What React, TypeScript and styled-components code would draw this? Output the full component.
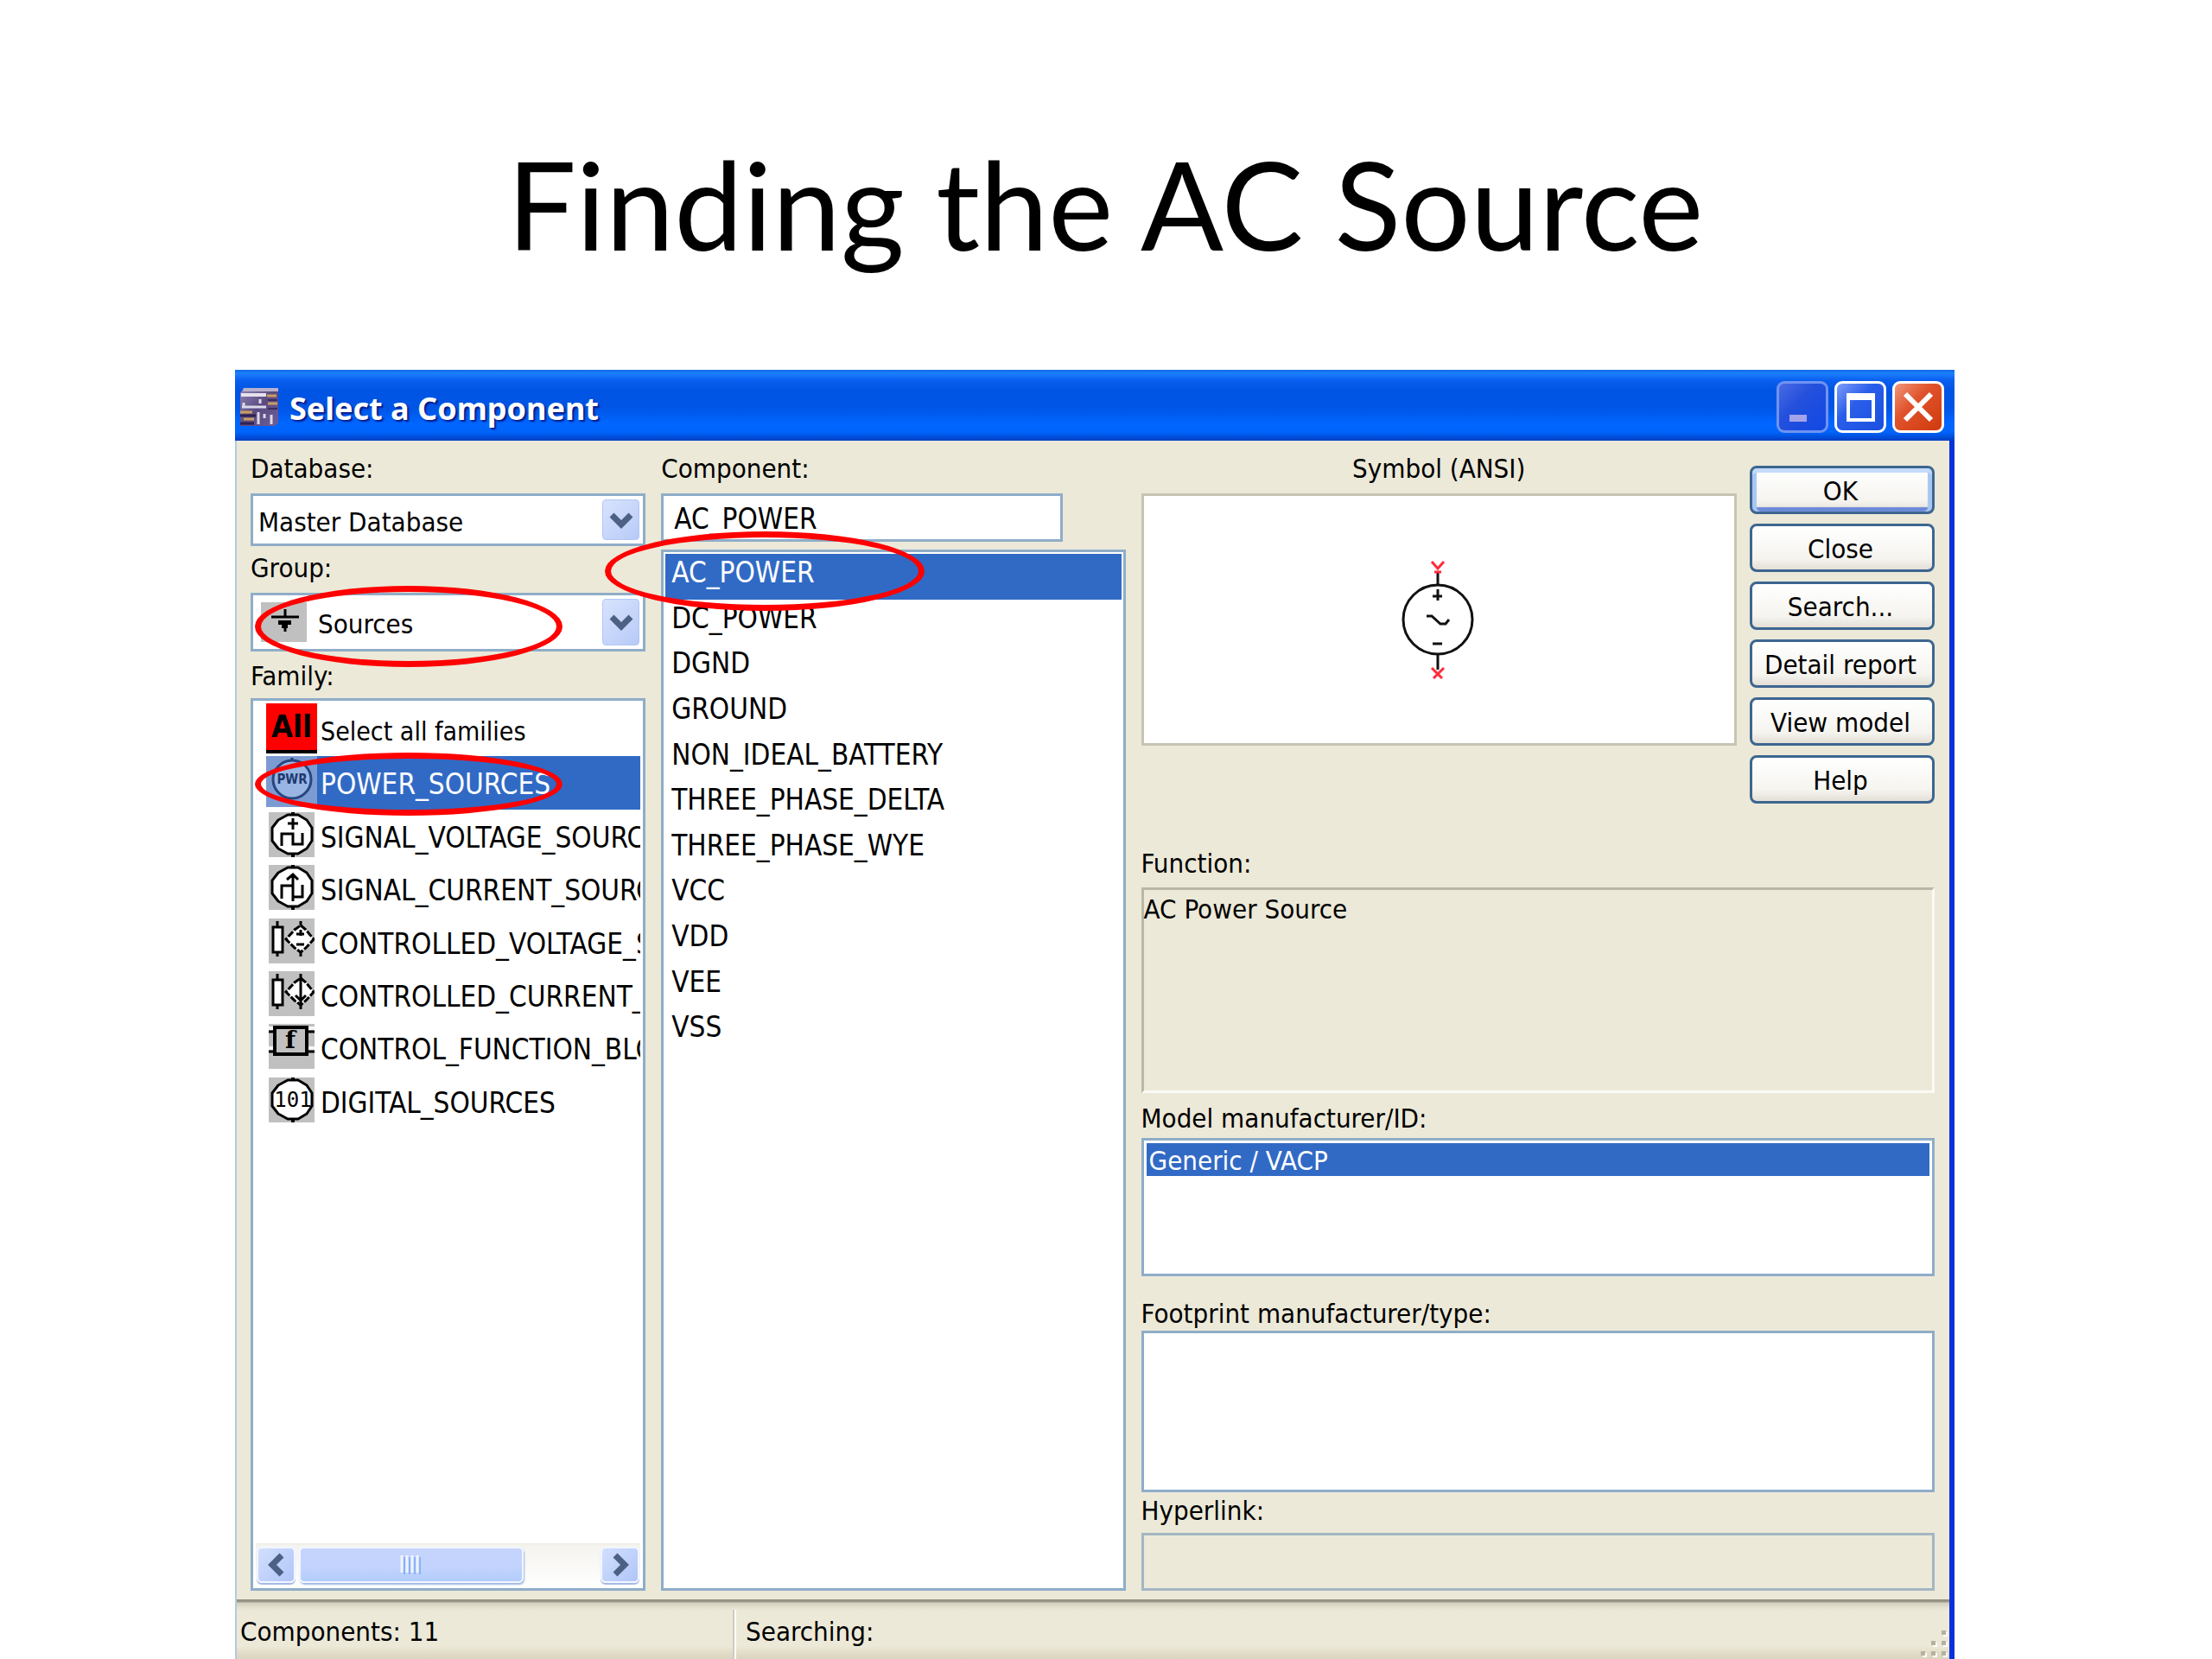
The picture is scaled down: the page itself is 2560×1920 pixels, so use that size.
import React, { useState } from "react";
import styled, { createGlobalStyle, css } from "styled-components";

const face = "#ece9d8";
const fieldBorder = "#8fadc8";
const highlight = "#316ac5";
const uiFont = '"DejaVu Sans Condensed", "DejaVu Sans", "Noto Sans", sans-serif';

const GlobalStyle = createGlobalStyle`
  *, *::before, *::after { box-sizing: border-box; }
  body { margin: 0; background: #fff; overflow-x: hidden; }
  button, input, select { font: inherit; color: inherit; }
`;

const Slide = styled.main`
  display: flex;
  flex-direction: column;
  min-height: 100vh;
  padding: 0 298px 0 272px;
  background: #fff;
  color: #000;
`;

const SlideTitle = styled.h1`
  margin: 0;
  padding: 150px 0 108px 24px;
  font: 400 142px/170px Lato, "Open Sans", sans-serif;
  text-align: center;
  white-space: nowrap;
`;

const Dialog = styled.section`
  flex: 1;
  display: flex;
  flex-direction: column;
  font: 400 31px/36px ${uiFont};
  white-space: nowrap;
`;

const TitleBar = styled.header`
  display: flex;
  align-items: center;
  height: 82px;
  padding: 4px 12px 0 6px;
  background: linear-gradient(
    #1169ea 0, #1c80fb 4px, #0a5ff0 12px, #0054e3 24px, #0055e6 44px, #0066ff 62px, #0064fa 72px, #0046cf 80px, #003cc0 82px
  );
`;

const DialogTitle = styled.h2`
  flex: 1;
  margin: 0;
  padding: 4px 0 0 13px;
  color: #fff;
  font: 700 36px/44px "Noto Sans", "Open Sans", sans-serif;
  text-shadow: 2px 2px 2px #0a1883;
`;

const CaptionButtons = styled.div`
  display: flex;
  gap: 7px;
`;

const captionTones = {
  dim: css`
    border-color: #6f93f2;
    background: linear-gradient(135deg, #4a6be4, #2450dc 40%, #1148e6);
  `,
  blue: css`
    border-color: #fff;
    background: linear-gradient(135deg, #7d9df8, #2a5eea 40%, #1a50e0);
  `,
  red: css`
    border-color: #fff;
    background: linear-gradient(135deg, #f0977b, #e0532c 40%, #cf3a0c);
  `,
};

const CaptionButton = styled.button<{ $tone: keyof typeof captionTones }>`
  display: grid;
  place-items: center;
  width: 60px;
  height: 60px;
  padding: 0;
  border: 3px solid;
  border-radius: 9px;
  ${(p) => captionTones[p.$tone]}
`;

const Body = styled.div`
  flex: 1;
  display: grid;
  grid-template-columns: 457fr 537fr 918fr;
  column-gap: 18px;
  padding: 14px 17px 10px 16px;
  border-left: 2px solid #b4c9e2;
  border-right: 6px solid #0831d9;
  background: ${face};
`;

const Column = styled.div`
  display: flex;
  flex-direction: column;
  min-width: 0;
`;

const labelText = css<{ $above?: number; $below: number }>`
  display: block;
  margin: ${(p) => p.$above ?? 0}px 0 ${(p) => p.$below}px;
`;
const Label = styled.label`${labelText}`;
const Caption = styled.span<{ $center?: boolean }>`
  ${labelText}
  text-align: ${(p) => (p.$center ? "center" : "left")};
`;

const Combo = styled.div<{ $tall?: boolean }>`
  position: relative;
  display: flex;
  align-items: center;
  height: ${(p) => (p.$tall ? 68 : 61)}px;
  padding: 4px;
  padding-left: ${(p) => (p.$tall ? 9 : 6)}px;
  gap: ${(p) => (p.$tall ? 13 : 0)}px;
  border: 3px solid ${fieldBorder};
  background: #fff;
`;

const ComboSelect = styled.select`
  flex: 1;
  min-width: 0;
  height: 100%;
  margin: 0;
  padding: 4px 0 0;
  border: 0;
  appearance: none;
  background: transparent;
`;

const ComboArrow = styled.span`
  display: grid;
  place-items: center;
  align-self: stretch;
  width: 43px;
  border: 1px solid #b3c6f7;
  border-radius: 4px;
  background: linear-gradient(135deg, #d8e3fd, #b7caf8);
  pointer-events: none;
`;

const frame = css`
  border: 3px solid ${fieldBorder};
  background: #fff;
`;

const FamilyBox = styled.div`
  ${frame}
  position: relative;
  flex: 1;
  display: flex;
  flex-direction: column;
  justify-content: space-between;
  padding: 3px 3px 2px;
`;

const FamilyList = styled.ul`
  display: grid;
  grid-auto-rows: 1fr;
  height: 491px;
  margin: 0;
  padding: 0 0 0 12px;
  list-style: none;
`;

const FamilyRow = styled.li<{ $selected?: boolean }>`
  display: grid;
  grid-template-columns: 59px minmax(0, 1fr);
  color: ${(p) => (p.$selected ? "#fff" : "#000")};
`;

const FamilyIcon = styled.span<{ $selected?: boolean }>`
  display: flex;
  align-items: flex-start;
  padding: ${(p) => (p.$selected ? "0" : "3px 0 0 3px")};
`;

const AllBadge = styled.span`
  display: grid;
  place-items: center;
  width: 59px;
  height: 58px;
  margin: -3px 0 0 -3px;
  border-bottom: 4px solid #000;
  background: #fe0000;
  color: #000;
  font-weight: 700;
  font-size: 36px;
`;

const FamilyName = styled.span<{ $selected?: boolean; $part?: boolean }>`
  overflow: hidden;
  padding: 13px 0 0 4px;
  background: ${(p) => (p.$selected ? highlight : "transparent")};
  font-size: ${(p) => (p.$part ? 33 : 30)}px;
  line-height: 40px;
`;

const ScrollBar = styled.div`
  display: grid;
  grid-template-columns: 45px 260px 1fr 45px;
  column-gap: 4px;
  height: 50px;
  padding: 2px 1px 0;
  border-top: 2px solid #f0efe8;
  background: linear-gradient(#f4f3ee, #fff);
`;

const scrollPiece = css`
  display: grid;
  place-items: center;
  height: 42px;
  padding: 0;
  border: 2px solid #f2f6ff;
  border-radius: 6px;
  background: linear-gradient(135deg, #d2dffd, #b0c6f8);
  box-shadow: 0 2px 1px #a3b9e4;
`;
const ScrollButton = styled.button`${scrollPiece}`;
const ScrollThumb = styled.span`
  ${scrollPiece}
  background: linear-gradient(#c6d4fd, #c2d3fd 60%, #b2cdfb);
  box-shadow: 1px 2px 2px #9eb8e0;
`;

const ComponentInput = styled.input`
  ${frame}
  width: 465px;
  max-width: 100%;
  height: 56px;
  margin: 0 0 9px;
  padding: 2px 0 0 12px;
  border-radius: 0;
  font-size: 33px;
  line-height: 42px;
`;

const ComponentBox = styled.div`
  ${frame}
  position: relative;
  flex: 1;
  padding: 2px;
`;

const ComponentList = styled.ul`
  display: grid;
  grid-auto-rows: 1fr;
  height: 579px;
  margin: 0;
  padding: 0;
  list-style: none;
  font-size: 33px;
  line-height: 40px;
`;

const ComponentRow = styled.li<{ $selected?: boolean }>`
  padding: 2px 0 0 7px;
  background: ${(p) => (p.$selected ? highlight : "transparent")};
  color: ${(p) => (p.$selected ? "#fff" : "#000")};
`;

const TopRight = styled.div`
  display: grid;
  grid-template-columns: minmax(0, 1fr) 214px;
  column-gap: 15px;
`;

const SymbolPreview = styled.div`
  display: grid;
  place-items: center;
  height: 292px;
  border: 3px solid #c6c4b3;
  background: #fff;
`;

const Actions = styled.div`
  display: flex;
  flex-direction: column;
  gap: 11px;
  padding-top: 15px;
`;

const ActionButton = styled.button<{ $primary?: boolean }>`
  height: 56px;
  padding: 2px 4px 0 0;
  border: 3px solid #3d6690;
  border-radius: 8px;
  background: linear-gradient(#fff, #f5f4ef 75%, #e3dfd6);
  ${(p) =>
    p.$primary &&
    css`
      box-shadow: inset 0 5px 1px #c3dafb, inset 5px 0 1px #a9c6f3, inset -5px 0 1px #a9c6f3, inset 0 -5px 1px #6c88d8;
    `}
`;

const FunctionText = styled.output`
  display: block;
  height: 238px;
  padding: 4px 0 0;
  border: 3px solid;
  border-color: #b9b7a8 #fbfaf4 #fbfaf4 #b9b7a8;
`;

const ModelList = styled.ul`
  ${frame}
  height: 160px;
  margin: 0;
  padding: 3px;
  list-style: none;
`;

const ModelRow = styled.li`
  height: 38px;
  padding: 2px 0 0 3px;
  background: ${highlight};
  color: #fff;
`;

const FootprintList = styled.ul`
  ${frame}
  height: 187px;
  margin: 0;
  padding: 3px;
  list-style: none;
`;

const HyperlinkInput = styled.input`
  height: 67px;
  padding: 0 8px;
  border: 3px solid #a3b6c3;
  background: ${face};
`;

const StatusBar = styled.footer`
  display: grid;
  grid-template-columns: 576px minmax(0, 1fr) auto;
  height: 70px;
  border-left: 2px solid #b4c9e2;
  border-right: 6px solid #0831d9;
  background: linear-gradient(#8f8d7f 0, #9c9a8b 3px, #d2cfbf 4px, #e6e3d2 10px, ${face} 14px, ${face} 54px, #e2dcc8 62px, #d9d2be 70px);
`;

const StatusCell = styled.span<{ $divided?: boolean }>`
  margin-top: 12px;
  padding: 7px 0 0 ${(p) => (p.$divided ? 11 : 4)}px;
  border-left: ${(p) => (p.$divided ? "2px solid #fff" : "0")};
  box-shadow: ${(p) => (p.$divided ? "-2px 0 0 #cfccba" : "none")};
`;

/* Red pen circles drawn over the dialog */
const Ring = styled.span<{ $x: number; $y: number; $w: number; $h: number }>`
  position: absolute;
  z-index: 2;
  left: ${(p) => p.$x}px;
  top: ${(p) => p.$y}px;
  width: ${(p) => p.$w}px;
  height: ${(p) => p.$h}px;
  border: 7px solid #fe0000;
  border-radius: 50%;
  pointer-events: none;
`;

const Chevron = ({ turn = 0 }: { turn?: number }) => (
  <svg width="30" height="30" viewBox="0 0 30 30" aria-hidden="true">
    <path d="M4 9 15 20 26 9" transform={`rotate(${turn} 15 15)`} fill="none" stroke="#4d6185" strokeWidth="7" />
  </svg>
);

const AppIcon = () => (
  <svg width="44" height="44" viewBox="0 0 44 44" aria-hidden="true">
    <defs>
      <linearGradient id="chip" x1="0" y1="0" x2="1" y2="1">
        <stop offset="0" stopColor="#8f86b4" />
        <stop offset="0.5" stopColor="#5a4a80" />
        <stop offset="1" stopColor="#6d5f96" />
      </linearGradient>
    </defs>
    <path d="M4 0H44V40L40 44H0V6Z" fill="url(#chip)" />
    <path d="M4 0H44V4H3Z" fill="#b9b0cc" />
    <path d="M1 8H30" stroke="#e6e2ee" strokeWidth="4" />
    <path d="M2 22H30M4 17V22M23 13V18M21 28V42M36 31V42M28 30V35" stroke="#dcd8ea" strokeWidth="3" fill="none" />
    <path d="M31 9H42M32 18H43M0 28H14M4 36H16" stroke="#c99f62" strokeWidth="3" />
    <path d="M0 32H18M0 41H16" stroke="#2f2152" strokeWidth="3" />
    <path d="M32 14H43M32 24H43" stroke="#3c2c5f" strokeWidth="2" />
  </svg>
);

const MinimizeGlyph = () => (
  <svg width="54" height="54" viewBox="0 0 54 54" aria-hidden="true">
    <rect x="12" y="36" width="20" height="8" fill="#a4a3ea" />
  </svg>
);
const MaximizeGlyph = () => (
  <svg width="54" height="54" viewBox="0 0 54 54" aria-hidden="true">
    <path d="M13 14H42V42H13Z" fill="none" stroke="#fff" strokeWidth="4" />
    <path d="M11 15H44" stroke="#fff" strokeWidth="8" />
  </svg>
);
const CloseGlyph = () => (
  <svg width="54" height="54" viewBox="0 0 54 54" aria-hidden="true">
    <path d="M12 12 42 42M42 12 12 42" stroke="#fff" strokeWidth="6" />
  </svg>
);

const GroundIcon = () => (
  <svg width="53" height="46" viewBox="0 0 53 46" aria-hidden="true">
    <rect width="53" height="46" fill="#c0c0c0" />
    <path d="M28 8V16M12 17H44" stroke="#000" strokeWidth="3" />
    <path d="M20 21H35V26H31V30H24V26H20Z" fill="#000" />
    <path d="M28 30V34" stroke="#000" strokeWidth="3" />
  </svg>
);

const Disc = () => (
  <>
    <path d="M28 0V5M28 46V52" stroke="#000" strokeWidth="4" />
    <path d="M22 3H34L44 9 50 18V33L44 42 34 48H22L11 42 4 33V18L11 9Z" fill="#fff" stroke="#000" strokeWidth="3" strokeLinejoin="round" />
  </>
);

const Tile = ({ children }: { children: React.ReactNode }) => (
  <svg width="53" height="52" viewBox="0 0 53 52" aria-hidden="true">
    <rect width="53" height="52" fill="#c0c0c0" />
    {children}
  </svg>
);

const PowerIcon = () => (
  <svg width="59" height="59" viewBox="0 0 59 59" aria-hidden="true">
    <rect width="59" height="59" fill="#7b9bd2" />
    <path d="M30 2V7" stroke="#1c3a70" strokeWidth="3" />
    <circle cx="30" cy="27" r="22" fill="#98b5e3" stroke="#27467f" strokeWidth="3" />
    <text x="30" y="32" textAnchor="middle" fontSize="15" fontWeight="700" fontFamily="DejaVu Sans Condensed, DejaVu Sans" fill="#1d3a70">PWR</text>
  </svg>
);

const SignalVoltageIcon = () => (
  <Tile>
    <Disc />
    <path d="M28 7V20M22 13H34M15 39V25H28V37H39V24" fill="none" stroke="#000" strokeWidth="3" />
  </Tile>
);
const SignalCurrentIcon = () => (
  <Tile>
    <Disc />
    <path d="M28 10V42M15 39V24H28M28 37H39V23M21 17 28 11 34 17" fill="none" stroke="#000" strokeWidth="3" />
  </Tile>
);

const ControlledBase = () => (
  <>
    <path d="M10 3V10M10 39V44M37 3V10M37 37V44" stroke="#000" strokeWidth="3" />
    <rect x="5" y="10" width="11" height="29" fill="#fff" stroke="#000" strokeWidth="3" />
    <path d="M37 8 43 13 52 24 43 34 37 39 30 34 20 24 30 13Z" fill="#fff" stroke="#000" strokeWidth="3" strokeDasharray="8 2" />
  </>
);
const ControlledVoltageIcon = () => (
  <Tile>
    <ControlledBase />
    <path d="M32 18H41M37 13V20M32 30H41" stroke="#000" strokeWidth="3" />
  </Tile>
);
const ControlledCurrentIcon = () => (
  <Tile>
    <ControlledBase />
    <path d="M37 8V40M31 28 37 34 43 28" fill="none" stroke="#000" strokeWidth="3" />
  </Tile>
);
const FunctionIcon = () => (
  <Tile>
    <path d="M0 5H6M45 5H53M0 28H6M45 28H53" stroke="#f6f6f6" strokeWidth="4" />
    <path d="M0 9H6M44 9H53M0 32H6M44 32H53" stroke="#000" strokeWidth="3" />
    <rect x="7" y="4" width="37" height="31" fill="#c0c0c0" stroke="#000" strokeWidth="4" />
    <text x="25" y="28" textAnchor="middle" fontSize="28" fontWeight="700" fontFamily="DejaVu Serif, Liberation Serif" fill="#000">f</text>
  </Tile>
);
const DigitalIcon = () => (
  <Tile>
    <Disc />
    <text x="28" y="34" textAnchor="middle" fontSize="24" fontFamily="DejaVu Sans Mono, Liberation Mono" fill="#000">101</text>
  </Tile>
);

const SourceSymbol = () => (
  <svg width="100" height="140" viewBox="0 0 100 140" role="img" aria-label="AC power source symbol">
    <circle cx="49" cy="70" r="40" fill="none" stroke="#111" strokeWidth="3" />
    <path d="M49 14V30M49 110V128M49 35V48M43 43H54M43 98H54" stroke="#111" strokeWidth="3" />
    <path d="M36 66H42L52 75H58L62 70" fill="none" stroke="#111" strokeWidth="3" />
    <path d="M42 3 49 11 56 3M45 15H53M42 126 54 138M56 126 44 138" fill="none" stroke="#ff2a3a" strokeWidth="3" />
  </svg>
);

const SizeGrip = () => (
  <svg width="36" height="70" viewBox="0 0 36 70" aria-hidden="true">
    {[[27, 36], [15, 48], [27, 48], [3, 60], [15, 60], [27, 60]].map(([x, y]) => (
      <g key={`${x}-${y}`}>
        <rect x={x + 2} y={y + 2} width="5" height="5" fill="#fff" />
        <rect x={x} y={y} width="5" height="5" fill="#b5b19f" />
      </g>
    ))}
  </svg>
);

const families = [
  { name: "Select all families", icon: <AllBadge>All</AllBadge> },
  { name: "POWER_SOURCES", icon: <PowerIcon /> },
  { name: "SIGNAL_VOLTAGE_SOURCES", icon: <SignalVoltageIcon /> },
  { name: "SIGNAL_CURRENT_SOURCES", icon: <SignalCurrentIcon /> },
  { name: "CONTROLLED_VOLTAGE_SOURCES", icon: <ControlledVoltageIcon /> },
  { name: "CONTROLLED_CURRENT_SOURCES", icon: <ControlledCurrentIcon /> },
  { name: "CONTROL_FUNCTION_BLOCKS", icon: <FunctionIcon /> },
  { name: "DIGITAL_SOURCES", icon: <DigitalIcon /> },
];

const components = [
  "AC_POWER", "DC_POWER", "DGND", "GROUND", "NON_IDEAL_BATTERY", "THREE_PHASE_DELTA",
  "THREE_PHASE_WYE", "VCC", "VDD", "VEE", "VSS",
];

const actions = ["OK", "Close", "Search...", "Detail report", "View model", "Help"];

export default function App() {
  const [component, setComponent] = useState("AC_POWER");

  return (
    <Slide>
      <GlobalStyle />
      <SlideTitle>Finding the AC Source</SlideTitle>
      <Dialog aria-labelledby="dialog-title">
        <TitleBar>
          <AppIcon />
          <DialogTitle id="dialog-title">Select a Component</DialogTitle>
          <CaptionButtons>
            <CaptionButton $tone="dim" aria-label="Minimize"><MinimizeGlyph /></CaptionButton>
            <CaptionButton $tone="blue" aria-label="Maximize"><MaximizeGlyph /></CaptionButton>
            <CaptionButton $tone="red" aria-label="Close window"><CloseGlyph /></CaptionButton>
          </CaptionButtons>
        </TitleBar>

        <Body>
          <Column>
            <Label htmlFor="database" $below={11}>Database:</Label>
            <Combo>
              <ComboSelect id="database"><option>Master Database</option></ComboSelect>
              <ComboArrow><Chevron /></ComboArrow>
            </Combo>
            <Label htmlFor="group" $above={7} $below={11}>Group:</Label>
            <Combo $tall>
              <GroundIcon />
              <ComboSelect id="group"><option>Sources</option></ComboSelect>
              <ComboArrow><Chevron /></ComboArrow>
              <Ring $x={2} $y={-11} $w={356} $h={94} />
            </Combo>
            <Caption id="family" $above={10} $below={8}>Family:</Caption>
            <FamilyBox>
              <FamilyList role="listbox" aria-labelledby="family">
                {families.map((f, i) => (
                  <FamilyRow key={f.name} role="option" aria-selected={i === 1} $selected={i === 1}>
                    <FamilyIcon $selected={i === 1}>{f.icon}</FamilyIcon>
                    <FamilyName $selected={i === 1} $part={i > 0}>{f.name}</FamilyName>
                  </FamilyRow>
                ))}
              </FamilyList>
              <ScrollBar>
                <ScrollButton aria-label="Scroll left"><Chevron turn={90} /></ScrollButton>
                <ScrollThumb>
                  <svg width="26" height="22" viewBox="0 0 26 22" aria-hidden="true">
                    <path d="M2 0V20M8 0V20M14 0V20M20 0V20" stroke="#eef4fe" strokeWidth="3" />
                    <path d="M5 2V22M11 2V22M17 2V22M23 2V22" stroke="#8cb0f8" strokeWidth="2" />
                  </svg>
                </ScrollThumb>
                <span />
                <ScrollButton aria-label="Scroll right"><Chevron turn={-90} /></ScrollButton>
              </ScrollBar>
              <Ring $x={2} $y={60} $w={356} $h={73} />
            </FamilyBox>
          </Column>

          <Column>
            <Label htmlFor="component" $below={11}>Component:</Label>
            <ComponentInput id="component" value={component} onChange={(e) => setComponent(e.target.value)} />
            <ComponentBox>
              <ComponentList role="listbox" aria-label="Components">
                {components.map((name, i) => (
                  <ComponentRow key={name} role="option" aria-selected={i === 0} $selected={i === 0}>{name}</ComponentRow>
                ))}
              </ComponentList>
              <Ring $x={-68} $y={-24} $w={370} $h={92} />
            </ComponentBox>
          </Column>

          <Column>
            <TopRight>
              <div>
                <Caption $below={11} $center>Symbol (ANSI)</Caption>
                <SymbolPreview><SourceSymbol /></SymbolPreview>
              </div>
              <Actions>
                {actions.map((a) => (
                  <ActionButton key={a} type="button" $primary={a === "OK"}>{a}</ActionButton>
                ))}
              </Actions>
            </TopRight>
            <Caption $above={51} $below={10}>Function:</Caption>
            <FunctionText>AC Power Source</FunctionText>
            <Caption id="model" $above={11} $below={5}>Model manufacturer/ID:</Caption>
            <ModelList role="listbox" aria-labelledby="model">
              <ModelRow role="option" aria-selected>Generic / VACP</ModelRow>
            </ModelList>
            <Caption id="footprint" $above={25} $below={2}>Footprint manufacturer/type:</Caption>
            <FootprintList role="listbox" aria-labelledby="footprint" />
            <Label htmlFor="hyperlink" $above={3} $below={8}>Hyperlink:</Label>
            <HyperlinkInput id="hyperlink" readOnly />
          </Column>
        </Body>

        <StatusBar>
          <StatusCell>Components: 11</StatusCell>
          <StatusCell $divided>Searching:</StatusCell>
          <SizeGrip />
        </StatusBar>
      </Dialog>
    </Slide>
  );
}
